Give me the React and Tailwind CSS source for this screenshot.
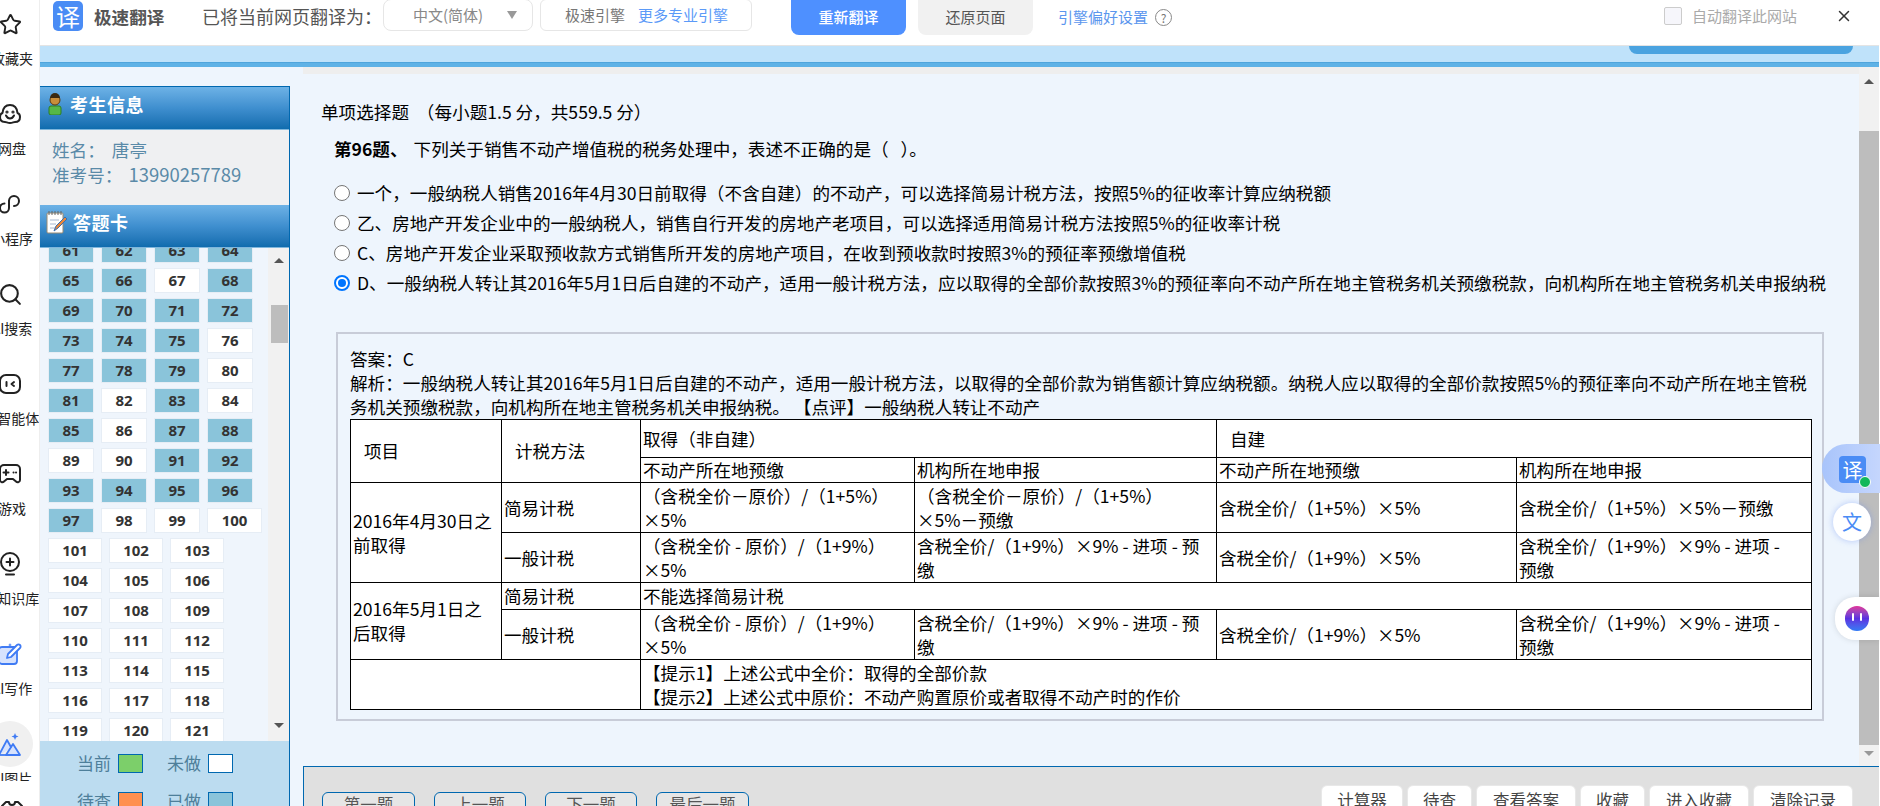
import React from 'react';
import { Star, Search, X } from 'lucide-react';

const cjk = { fontFamily: '"Noto Sans CJK SC", sans-serif' };

// left rail, shifted off the edge of the window in the screenshot
const StarIcon = () => <Star size={23} strokeWidth={2} className="text-[#222]" />;
const CloudIcon = () => (
  <svg width="24" height="24" viewBox="0 0 24 24" fill="none" stroke="#222" strokeWidth="2" strokeLinejoin="round" strokeLinecap="round">
    <path d="M7 20c-3 0-5-2-5-5 0-2 1-3.500 2.500-4C5 6 8 3 12 3s7 3 7.500 8c1.500.5 2.500 2 2.500 4 0 3-2 5-5 5-1.500 0-2.500 1-5 1s-3.500-1-5-1z" />
    <path d="M8 13.500c1 2 2.500 3 4 3s3-1 4-3" />
    <circle cx="9" cy="10" r=".6" />
    <circle cx="15" cy="10" r=".6" />
  </svg>
);
const LoopIcon = () => (
  <svg width="24" height="24" viewBox="0 0 24 24" fill="none" stroke="#222" strokeWidth="2" strokeLinecap="round">
    <path d="M11 9v7a4.500 4.500 0 1 1-4.500-4.500" />
    <path d="M11 9a5 5 0 1 1 5 5" />
  </svg>
);
const SearchIcon = () => <Search size={25} strokeWidth={2} className="text-[#222]" />;
const AgentIcon = () => (
  <svg width="24" height="24" viewBox="0 0 24 24" fill="none" stroke="#222" strokeWidth="2" strokeLinecap="round" strokeLinejoin="round">
    <rect x="2" y="3" width="20" height="18" rx="6" />
    <path d="M8.500 10v4M16 10l-2.500 2 2.500 2" />
  </svg>
);
const GameIcon = () => (
  <svg width="24" height="24" viewBox="0 0 24 24" fill="none" stroke="#222" strokeWidth="2" strokeLinecap="round" strokeLinejoin="round">
    <path d="M6 3h12a4 4 0 0 1 4 4v11c0 2-2.500 3-4 1.500L15 17H9l-3 2.500C4.500 21 2 20 2 18V7a4 4 0 0 1 4-4z" />
    <path d="M8 8v5M5.500 10.500h5M15.500 10.500h.1M18 10.500h.1" />
  </svg>
);
const BulbIcon = () => (
  <svg width="24" height="24" viewBox="0 0 24 24" fill="none" stroke="#222" strokeWidth="2" strokeLinecap="round">
    <circle cx="12" cy="10" r="9" />
    <path d="M12 6.500v7M8.500 10h7M8 22.500h8" />
  </svg>
);
const PenIcon = () => (
  <svg width="24" height="24" viewBox="0 0 24 24" fill="none">
    <rect x="1" y="5" width="18" height="17" rx="3" fill="#d6e2fd" stroke="#3f7bf4" strokeWidth="1.800" />
    <path d="M9 16l1-4 9-9a2 2 0 0 1 3 3l-9 9z" fill="#fff" stroke="#3f7bf4" strokeWidth="1.800" strokeLinejoin="round" />
    <path d="M12 1l.6 1.400L14 3l-1.400.6L12 5l-.6-1.400L10 3l1.400-.6z" fill="#3f7bf4" />
  </svg>
);
const MountainIcon = () => (
  <svg width="24" height="24" viewBox="0 0 24 24" fill="none">
    <path d="M1 23L9 8l4.500 8M8 23l7-11 7 11z" fill="#d6e2fd" stroke="#3f7bf4" strokeWidth="1.800" strokeLinejoin="round" />
    <path d="M1 23h21" stroke="#3f7bf4" strokeWidth="1.800" />
    <path d="M17 1l1 2.500 2.500 1-2.500 1-1 2.500-1-2.500-2.500-1 2.500-1z" fill="#3f7bf4" />
  </svg>
);
const ShirtIcon = () => (
  <svg width="24" height="24" viewBox="0 0 24 24" fill="none" stroke="#222" strokeWidth="2" strokeLinejoin="round">
    <path d="M6 3l-4 4 3 4 2-1v11h10V10l2 1 3-4-4-4h-3a3 3 0 0 1-6 0z" />
  </svg>
);

const railItems = [
  { icon: <StarIcon />, label: '收藏夹' },
  { icon: <CloudIcon />, label: '网盘' },
  { icon: <LoopIcon />, label: '小程序' },
  { icon: <SearchIcon />, label: 'AI搜索' },
  { icon: <AgentIcon />, label: 'AI智能体' },
  { icon: <GameIcon />, label: '游戏' },
  { icon: <BulbIcon />, label: 'AI知识库' },
  { icon: <PenIcon />, label: 'AI写作' },
  { icon: <MountainIcon />, label: 'AI图片', active: true },
];

const Rail = () => (
  <div className="w-[40px] shrink-0 h-full overflow-hidden bg-white border-r border-[#eeeeee] pt-[12px]">
    {railItems.map((item) => (
      <div key={item.label} className="w-[24px] h-[90px] flex flex-col items-center">
        <div className="relative w-[24px] h-[24px] mr-[4px] flex items-center justify-center">
          {item.active && <div className="absolute -left-[11px] -top-[11px] w-[46px] h-[46px] rounded-full bg-[#f0f0f0]" />}
          <div className="relative">{item.icon}</div>
        </div>
        <div className={`mt-[12px] leading-[20px] text-[14px] text-[#222] whitespace-nowrap ${item.active ? 'h-[13px] overflow-hidden' : 'h-[20px]'}`}>{item.label}</div>
      </div>
    ))}
    <div className="w-[24px] -mt-[23px] mr-[4px]"><ShirtIcon /></div>
  </div>
);

const TopBar = () => (
  <div className="h-[46px] shrink-0 bg-white border-b border-[#e4e4e4] flex items-start relative">
    <div className="ml-[13px] mt-[1px] w-[30px] h-[30px] rounded-[5px] bg-[#4a8cf5] text-white text-[24px] leading-[30px] text-center">译</div>
    <div className="ml-[11px] w-[72px] text-[17.6px] font-bold leading-[32px] mt-[1px] text-[#555] whitespace-nowrap">极速翻译</div>
    <div className="ml-[36px] w-[181px] text-[18px] leading-[32px] text-[#555] whitespace-nowrap">已将当前网页翻译为：</div>
    <div className="w-[150px] h-[32px] -mt-px border border-[#e6e6e6] rounded-[8px] flex items-center pl-[29px] text-[15px] text-[#888]">
      中文(简体)
      <span className="ml-[24px] w-0 h-0 border-l-[5px] border-r-[5px] border-t-[8px] border-l-transparent border-r-transparent border-t-[#999]" />
    </div>
    <div className="ml-[7px] w-[212px] h-[32px] -mt-px border border-[#e6e6e6] rounded-[6px] flex items-center pl-[24px] text-[15px]">
      <span className="text-[#777]">极速引擎</span>
      <span className="ml-[13px] text-[#5b9af8]">更多专业引擎</span>
    </div>
    <div className="ml-[39px] w-[115px] h-[35px] rounded-b-[8px] bg-[#4e90ff] text-white text-[15px] font-medium flex items-center justify-center">重新翻译</div>
    <div className="ml-[12px] w-[115px] h-[35px] rounded-b-[8px] bg-[#f1f1f1] text-[#555] text-[15px] flex items-center justify-center">还原页面</div>
    <div className="ml-[25px] h-[35px] flex items-center text-[15px] text-[#5b96ee]">引擎偏好设置</div>
    <div className="ml-[7px] mt-[9px] w-[17px] h-[17px] rounded-full border border-[#888] text-[#777] text-[12px] leading-[15px] text-center">?</div>
    <div className="ml-[492px] mt-[7px] w-[18px] h-[18px] rounded-[2px] border border-[#cccccc] bg-[#f6f6fb]" />
    <div className="ml-[10px] h-[32px] flex items-center text-[15px] text-[#aaaaaa] whitespace-nowrap">自动翻译此网站</div>
    <X size={18} strokeWidth={2} className="ml-[38px] mt-[7px] text-[#333]" />
  </div>
);

const Strip = () => (
  <div className="h-[21px] shrink-0 flex flex-col">
    <div className="h-[16px] bg-[#bfe2fa] flex justify-end pr-[26px]">
      <div className="w-[224px] h-[8px] bg-[#4aa3e0] rounded-b-[8px]" />
    </div>
    <div className="h-[5px] bg-[#5fb2e6] border-t border-[#4fa5dc]" />
  </div>
);

const PersonIcon = () => (
  <svg width="14" height="22" viewBox="0 0 14 22">
    <rect x="1" y="13" width="12" height="9" rx="2" fill="#56b848" stroke="#2e7f24" />
    <circle cx="7" cy="7" r="5" fill="#c98e3a" stroke="#5b3c10" />
    <path d="M2 5a5 5 0 0 1 10 0z" fill="#3b2a10" />
  </svg>
);
const NoteIcon = () => (
  <svg width="22" height="24" viewBox="0 0 22 24">
    <rect x="1" y="3" width="16" height="20" rx="1" fill="#fff" stroke="#9a8a70" />
    <path d="M3 1v4M6 1v4M9 1v4M12 1v4M15 1v4" stroke="#666" />
    <path d="M4 10h9M4 14h6M4 18h5" stroke="#a8b8d0" />
    <path d="M8 21l2-5 9-9 2 2-9 9z" fill="#e8863a" stroke="#3a6fb0" />
  </svg>
);

const PanelHeader = ({ icon, title, iconBox }) => (
  <div className="h-[43px] shrink-0 flex items-center pb-[8px] bg-gradient-to-b from-[#6db2e6] via-[#3f8fcf] to-[#0f6cae] border-b border-[#7fb6dc]">
    <div className={iconBox}>{icon}</div>
    <div className="text-white text-[18px] font-bold tracking-[0.5px]">{title}</div>
  </div>
);

const whiteCells = [67, 76, 80, 82, 84, 86, 89, 90, 98, 99, 100];
const numbers = Array.from({ length: 61 }, (_, i) => i + 61);

const NumberCell = ({ n }) => {
  const done = n < 101 && !whiteCells.includes(n);
  const width = n > 100 ? 'w-[54px]' : n === 100 ? 'w-[55px]' : 'w-[46px]';
  return (
    <div className={`${width} h-[25px] border border-[#e6edf5] ${done ? 'bg-[#8ac4da]' : 'bg-white'} text-[#333] text-[15px] font-bold leading-[23px] text-center`}
      style={{ fontFamily: '"Noto Sans", sans-serif' }}>
      {n}
    </div>
  );
};

const Legend = ({ label, swatch }) => (
  <div className="flex items-center">
    <span className="w-[35px] text-[17px] text-[#4e7f9a] leading-[20px] whitespace-nowrap">{label}</span>
    <span className={`ml-[6px] w-[25px] h-[19px] border border-[#0068b0] ${swatch}`} />
  </div>
);

const SidePanel = () => (
  <div className="w-[250px] shrink-0 mt-[19px] flex flex-col border-r border-t border-[#0068b0] overflow-hidden bg-[#eff5fc]">
    <PanelHeader title="考生信息" icon={<PersonIcon />} iconBox="ml-[8px] w-[22px]" />
    <div className="h-[75px] shrink-0 bg-[#eff0f2] pl-[12px] pt-[8px] text-[17.6px] leading-[24px] text-[#5a8aa8]">
      <div>姓名：<span className="ml-[7px]">唐亭</span></div>
      <div>准考号：<span className="ml-[6px] text-[18.5px]">13990257789</span></div>
    </div>
    <PanelHeader title="答题卡" icon={<NoteIcon />} iconBox="ml-[6px] w-[27px]" />
    <div className="flex-1 min-h-0 flex overflow-hidden">
      <div className="w-[228px] shrink-0 pl-[8px] overflow-hidden">
        <div className="-mt-[10px] flex flex-wrap gap-x-[7px] gap-y-[5px]">
          {numbers.map((n) => <NumberCell key={n} n={n} />)}
        </div>
      </div>
      <div className="w-[21px] shrink-0 bg-[#f1f1f1] flex flex-col items-center relative">
        <div className="mt-[10px] w-0 h-0 border-l-[5px] border-r-[5px] border-b-[5px] border-l-transparent border-r-transparent border-b-[#555]" />
        <div className="mt-[42px] ml-[2px] w-[17px] h-[38px] bg-[#bdbdbd]" />
        <div className="mt-[380px] w-0 h-0 border-l-[5px] border-r-[5px] border-t-[5px] border-l-transparent border-r-transparent border-t-[#555]" />
      </div>
    </div>
    <div className="h-[65px] shrink-0 bg-[#bcdcf0] pl-[37px] pt-[12px] grid grid-cols-[90px_70px] gap-y-[18px] content-start">
      <Legend label="当前" swatch="bg-[#7ccf6a]" />
      <Legend label="未做" swatch="bg-white" />
      <Legend label="待查" swatch="bg-[#ff9050]" />
      <Legend label="已做" swatch="bg-[#8ac4da]" />
    </div>
  </div>
);

const options = [
  '一个，一般纳税人销售2016年4月30日前取得（不含自建）的不动产，可以选择简易计税方法，按照5%的征收率计算应纳税额',
  '乙、房地产开发企业中的一般纳税人，销售自行开发的房地产老项目，可以选择适用简易计税方法按照5%的征收率计税',
  'C、房地产开发企业采取预收款方式销售所开发的房地产项目，在收到预收款时按照3%的预征率预缴增值税',
  'D、一般纳税人转让其2016年5月1日后自建的不动产，适用一般计税方法，应以取得的全部价款按照3%的预征率向不动产所在地主管税务机关预缴税款，向机构所在地主管税务机关申报纳税',
];

const Option = ({ text, checked }) => (
  <div className="flex items-center h-[30px]">
    {checked ? (
      <span className="w-[16px] h-[16px] rounded-full border-2 border-[#0075ff] bg-white flex items-center justify-center shrink-0">
        <span className="w-[8px] h-[8px] rounded-full bg-[#0075ff]" />
      </span>
    ) : (
      <span className="w-[16px] h-[16px] rounded-full border border-[#767676] bg-white shrink-0" />
    )}
    <span className="ml-[7px] whitespace-nowrap">{text}</span>
  </div>
);

const td = 'border border-black px-[2px] align-middle';

const AnswerTable = () => {
  // the last column wraps one step earlier in the picture
  const generalRow = (
    <>
      <td className={td}>（含税全价 - 原价）/（1+9%）×5%</td>
      <td className={td}>含税全价/（1+9%）×9% - 进项 - 预缴</td>
      <td className={td}>含税全价/（1+9%）×5%</td>
      <td className={`${td} pr-[22px]`}>含税全价/（1+9%）×9% - 进项 - 预缴</td>
    </>
  );
  return (
    <table className="w-[1461px] table-fixed border-collapse bg-white text-black text-[17.6px] leading-[24px]">
      <colgroup>
        <col className="w-[151px]" />
        <col className="w-[139px]" />
        <col className="w-[274px]" />
        <col className="w-[302px]" />
        <col className="w-[300px]" />
        <col className="w-[295px]" />
      </colgroup>
      <tbody>
        <tr className="h-[38px]">
          <td rowSpan={2} className={`${td} pl-[13px]`}>项目</td>
          <td rowSpan={2} className={`${td} pl-[13px]`}>计税方法</td>
          <td colSpan={2} className={td}>取得（非自建）</td>
          <td colSpan={2} className={`${td} pl-[13px]`}>自建</td>
        </tr>
        <tr className="h-[25px]">
          <td className={td}>不动产所在地预缴</td>
          <td className={td}>机构所在地申报</td>
          <td className={td}>不动产所在地预缴</td>
          <td className={td}>机构所在地申报</td>
        </tr>
        <tr className="h-[50px]">
          <td rowSpan={2} className={td}>2016年4月30日之前取得</td>
          <td className={td}>简易计税</td>
          <td className={td}>（含税全价－原价）/（1+5%）×5%</td>
          <td className={`${td} pr-[30px]`}>（含税全价－原价）/（1+5%）×5%－预缴</td>
          <td className={td}>含税全价/（1+5%）×5%</td>
          <td className={td}>含税全价/（1+5%）×5%－预缴</td>
        </tr>
        <tr className="h-[50px]">
          <td className={td}>一般计税</td>
          {generalRow}
        </tr>
        <tr className="h-[27px]">
          <td rowSpan={2} className={td}>2016年5月1日之后取得</td>
          <td className={td}>简易计税</td>
          <td colSpan={4} className={td}>不能选择简易计税</td>
        </tr>
        <tr className="h-[50px]">
          <td className={td}>一般计税</td>
          {generalRow}
        </tr>
        <tr className="h-[50px]">
          <td colSpan={2} className={td}></td>
          <td colSpan={4} className={td}>
            <div>【提示1】上述公式中全价：取得的全部价款</div>
            <div>【提示2】上述公式中原价：不动产购置原价或者取得不动产时的作价</div>
          </td>
        </tr>
      </tbody>
    </table>
  );
};

const QuestionArea = () => (
  <div className="flex-1 min-h-0 flex overflow-hidden">
    <div className="flex-1 min-w-0 flex flex-col overflow-hidden">
      <div className="h-[7px] shrink-0 bg-[#eeeeee]" />
      <div className="flex-1 min-h-0 pl-[18px] pt-[26px] text-[17.6px] leading-[24px] text-black">
        <div className="h-[24px]">单项选择题 &nbsp;（每小题1.5 分，共559.5 分）</div>
        <div className="h-[24px] mt-[13px] ml-[13px]">
          <span className="font-bold">第96题、</span>
          <span className="ml-[6px]">下列关于销售不动产增值税的税务处理中，表述不正确的是（ &nbsp;&nbsp;）。</span>
        </div>
        <div className="mt-[17px] ml-[13px]">
          <Option text={options[0]} />
          <Option text={options[1]} />
          <Option text={options[2]} />
          <Option text={options[3]} checked />
        </div>
        <div className="mt-[34px] ml-[15px] w-[1488px] h-[389px] border-2 border-[#c8ccd8] pl-[12px] pt-[13px]">
          <div className="h-[24px]">答案：C</div>
          <div className="w-[1462px]">解析：一般纳税人转让其2016年5月1日后自建的不动产，适用一般计税方法，以取得的全部价款为销售额计算应纳税额。纳税人应以取得的全部价款按照5%的预征率向不动产所在地主管税务机关预缴税款，向机构所在地主管税务机关申报纳税。&nbsp;【点评】一般纳税人转让不动产</div>
          <AnswerTable />
        </div>
      </div>
    </div>
    <div className="w-[20px] shrink-0 bg-[#f1f1f1] flex flex-col items-center">
      <div className="mt-[12px] w-0 h-0 border-l-[5px] border-r-[5px] border-b-[5px] border-l-transparent border-r-transparent border-b-[#555]" />
      <div className="mt-[47px] w-full h-[614px] bg-[#bdbdbd]" />
      <div className="mt-[6px] w-0 h-0 border-l-[5px] border-r-[5px] border-t-[5px] border-l-transparent border-r-transparent border-t-[#999]" />
    </div>
  </div>
);

const FooterButton = ({ label, w, className }) => (
  <div className={`${w} h-[30px] flex items-center justify-center text-[16.5px] ${className}`}>{label}</div>
);

const navClass = 'border border-[#0068b0] rounded-[6px] text-[#555] bg-[#e6e6e6] pb-[6px]';
const toolClass = 'rounded-t-[6px] bg-white text-[#444] border border-[#e8e8e8]';

const Footer = () => (
  <div className="h-[40px] shrink-0 bg-[#e0e0e0] border-t border-l border-[#0068b0] flex justify-between pl-[18px] pr-[26px]">
    <div className="flex gap-[19px] mt-[25px]">
      <FooterButton label="第一题" w="w-[93px]" className={navClass} />
      <FooterButton label="上一题" w="w-[92px]" className={navClass} />
      <FooterButton label="下一题" w="w-[92px]" className={navClass} />
      <FooterButton label="最后一题" w="w-[93px]" className={navClass} />
    </div>
    <div className="flex gap-[4px] mt-[18px]">
      <FooterButton label="计算器" w="w-[82px]" className={toolClass} />
      <FooterButton label="待查" w="w-[65px]" className={toolClass} />
      <FooterButton label="查看答案" w="w-[100px]" className={toolClass} />
      <FooterButton label="收藏" w="w-[65px]" className={toolClass} />
      <FooterButton label="进入收藏" w="w-[100px]" className={toolClass} />
      <FooterButton label="清除记录" w="w-[100px]" className={toolClass} />
    </div>
  </div>
);

// floating translate / assistant buttons on the right edge
const FloatingTools = () => (
  <>
    <div className="absolute left-[1822px] top-[444px] w-[58px] h-[49px] rounded-l-[25px] bg-gradient-to-r from-[#a8c4fb] to-[#c5d6fd]">
      <div className="absolute left-[17px] top-[12px] w-[27px] h-[27px] rounded-[4px] bg-[#4a8cf5] text-white text-[20px] leading-[27px] text-center">译</div>
      <div className="absolute left-[37px] top-[32px] w-[12px] h-[12px] rounded-full bg-[#12b85a] border border-white" />
    </div>
    <div className="absolute left-[1833px] top-[503px] w-[38px] h-[38px] rounded-full bg-white shadow-[0_0_6px_rgba(90,130,240,0.4)] text-[#4a8cf5] text-[20px] leading-[38px] text-center">文</div>
    <div className="absolute left-[1835px] top-[597px] w-[45px] h-[43px] rounded-l-[20px] bg-white shadow-[0_0_6px_rgba(0,0,0,0.12)]">
      <div className="absolute left-[10px] top-[9px] w-[24px] h-[25px] rounded-full bg-gradient-to-b from-[#e0309a] via-[#5a30e0] to-[#2f7bf5]" />
      <div className="absolute left-[17px] top-[16px] w-[2px] h-[8px] rounded-full bg-white" />
      <div className="absolute left-[25px] top-[16px] w-[2px] h-[8px] rounded-full bg-white" />
    </div>
  </>
);

const App = () => (
  <div className="relative w-[1880px] h-[806px] overflow-hidden flex bg-white" style={cjk}>
    <Rail />
    <div className="w-[1839px] shrink-0 flex flex-col bg-[#eef5fd]">
      <TopBar />
      <Strip />
      <div className="flex-1 min-h-0 flex">
        <SidePanel />
        <div className="flex-1 min-w-0 ml-[13px] flex flex-col">
          <QuestionArea />
          <Footer />
        </div>
      </div>
    </div>
    <FloatingTools />
  </div>
);

export default App;
